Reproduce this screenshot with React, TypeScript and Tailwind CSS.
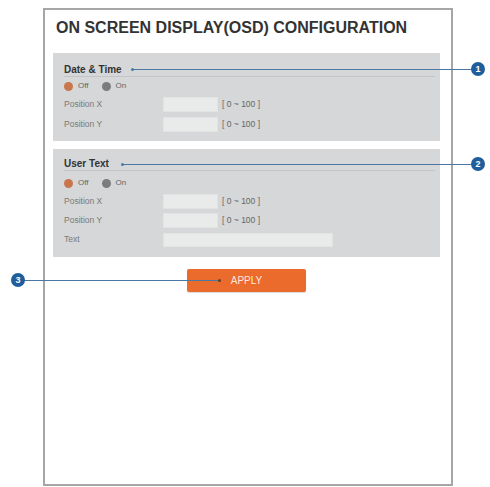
import React from 'react';

function Radio() {
    return (
        <div className="flex items-center h-[14px] text-[8px] text-[#666]">
            <span className="w-[9px] h-[9px] rounded-full bg-[#c9764b]" />
            <span className="ml-[5px]">Off</span>
            <span className="ml-[13px] w-[9px] h-[9px] rounded-full bg-[#7c7c7c]" />
            <span className="ml-[5px]">On</span>
        </div>
    );
}

function Row({ label, wide, h }: { label: string; wide?: boolean; h: string }) {
    return (
        <div className={"flex items-center text-[8.5px] text-[#7a7a7a] " + h}>
            <span className="w-[99px]">{label}</span>
            {wide ? (
                <div className="w-[170px] h-[14px] bg-[#e9eaea] border border-[#e2e3e3]" />
            ) : (
                <>
                    <div className="w-[55px] h-[15px] bg-[#e9eaea] border border-[#e2e3e3]" />
                    <span className="ml-[4px] text-[#666]">[ 0 ~ 100 ]</span>
                </>
            )}
        </div>
    );
}

function Section({ title, children, className }: { title: string; children: React.ReactNode; className: string }) {
    return (
        <div className={"ml-[8px] w-[387px] bg-[#d5d7d8] pl-[11px] pr-[5px] flex flex-col " + className}>
            <div className="h-[12px] leading-[12px] text-[10px] font-bold text-[#333] border-b border-[#c2c4c5] box-content">{title}</div>
            {children}
        </div>
    );
}

export default function App() {
    return (
        <div className="relative w-[490px] h-[487px] bg-white pt-[8px] pl-[43px] font-['Liberation_Sans',Arial,sans-serif]">
            <div className="w-[410px] h-[478px] border-2 border-[#a6a6a6] flex flex-col">
                <div className="pt-[9px] pl-[11px] text-[16px] leading-[18px] font-bold text-[#333]">
                    ON SCREEN DISPLAY(OSD) CONFIGURATION
                </div>

                <Section title="Date & Time" className="mt-[16px] pt-[11px] pb-[7px]">
                    <div className="mt-[2px]"><Radio /></div>
                    <div className="mt-[1px]">
                        <Row label="Position X" h="h-[20px]" />
                        <Row label="Position Y" h="h-[20px]" />
                    </div>
                </Section>

                <Section title="User Text" className="mt-[8px] pt-[9px] pb-[8px]">
                    <div className="mt-[5px]"><Radio /></div>
                    <div className="mt-[2px]">
                        <Row label="Position X" h="h-[19px]" />
                        <Row label="Position Y" h="h-[19px]" />
                        <Row label="Text" wide h="h-[19px]" />
                    </div>
                </Section>

                <button className="mt-[12px] ml-[142px] w-[119px] h-[23px] bg-[#ea6b2c] rounded-[2px] text-[10px] text-[#fde6da] flex items-center justify-center shadow-[0_1px_1px_rgba(0,0,0,0.15)]">
                    APPLY
                </button>
            </div>

            {/* callout annotations over the page */}
            <div className="absolute left-[132px] top-[69px] w-[340px] h-px bg-[#4a78a3]" />
            <div className="absolute left-[131px] top-[68px] w-[3px] h-[3px] rounded-full bg-[#4a78a3]" />
            <div className="absolute left-[471px] top-[62px] w-[14px] h-[14px] rounded-full bg-[#1f5e9b] text-white text-[9px] font-bold leading-[14px] text-center">1</div>

            <div className="absolute left-[122px] top-[164px] w-[350px] h-px bg-[#4a78a3]" />
            <div className="absolute left-[121px] top-[163px] w-[3px] h-[3px] rounded-full bg-[#4a78a3]" />
            <div className="absolute left-[471px] top-[157px] w-[14px] h-[14px] rounded-full bg-[#1f5e9b] text-white text-[9px] font-bold leading-[14px] text-center">2</div>

            <div className="absolute left-[24px] top-[280px] w-[195px] h-px bg-[#4a78a3]" />
            <div className="absolute left-[218px] top-[279px] w-[3px] h-[3px] rounded-full bg-[#5a4030]" />
            <div className="absolute left-[11px] top-[273px] w-[14px] h-[14px] rounded-full bg-[#1f5e9b] text-white text-[9px] font-bold leading-[14px] text-center">3</div>
        </div>
    );
}
